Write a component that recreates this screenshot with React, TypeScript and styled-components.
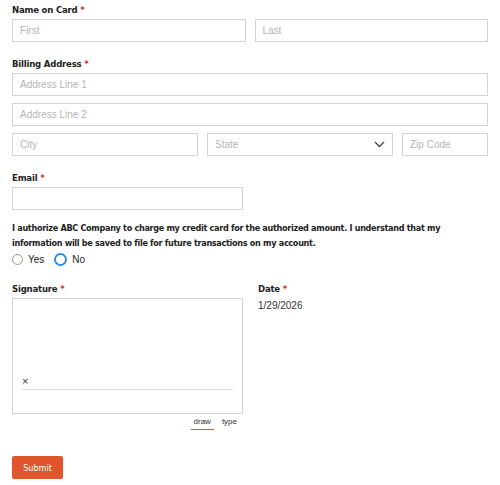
import React from "react";
import styled, { createGlobalStyle } from "styled-components";

const Global = createGlobalStyle`
  body { margin: 0; background: #fff; font-family: "Liberation Sans", Arial, sans-serif; }
  * { box-sizing: border-box; }
`;

const narrow = `"DejaVu Sans Condensed", "DejaVu Sans", sans-serif`;

const Form = styled.div`
  padding: 3px 12px 0 12px;
  width: 500px;
`;

const Field = styled.div<{ $mb?: number }>`
  margin-bottom: ${(p) => p.$mb ?? 15}px;
`;

const Label = styled.div`
  font-family: ${narrow};
  font-weight: bold;
  font-size: 9.5px;
  letter-spacing: -0.2px;
  line-height: 14px;
  color: #222;
  height: 16px;
  &::after { content: " *"; color: #d0302b; }
`;

const Row = styled.div<{ $cols: string }>`
  display: grid;
  grid-template-columns: ${(p) => p.$cols};
  gap: 9px;
  margin-bottom: 7px;
  &:last-child { margin-bottom: 0; }
`;

const Input = styled.div<{ $w?: number }>`
  height: 23px;
  width: ${(p) => (p.$w ? `${p.$w}px` : "auto")};
  border: 1px solid #d4d4d4;
  font-size: 10px;
  color: #b5b5b5;
  padding: 0 7px;
  display: flex;
  align-items: center;
  justify-content: space-between;
`;

const Para = styled.div`
  font-family: ${narrow};
  font-weight: bold;
  font-size: 9px;
  letter-spacing: -0.3px;
  line-height: 15px;
  color: #222;
  margin-bottom: 2px;
`;

const Radios = styled.div`
  display: flex;
  gap: 10px;
  font-size: 10px;
  line-height: 12px;
  color: #222;
  margin-bottom: 16px;
`;

const Radio = styled.span<{ $on?: boolean }>`
  display: flex;
  align-items: center;
  gap: 5px;
  &::before {
    content: "";
    width: 9px;
    height: 9px;
    border-radius: 50%;
    border: ${(p) => (p.$on ? "2.5px solid #2f8fdc" : "1px solid #999")};
  }
`;

const SigRow = styled.div`
  display: grid;
  grid-template-columns: 231px 1fr;
  gap: 15px;
  margin-bottom: 26px;
`;

const SigBox = styled.div`
  height: 116px;
  border: 1px solid #d4d4d4;
  padding: 0 9px 23px 9px;
  display: flex;
  flex-direction: column;
  justify-content: flex-end;
`;

const SigX = styled.div`
  font-size: 11px;
  line-height: 12px;
  color: #333;
  padding-bottom: 2px;
  border-bottom: 1px solid #ddd;
`;

const Tabs = styled.div`
  display: flex;
  justify-content: flex-end;
  gap: 5px;
  padding-right: 3px;
  margin-top: 2px;
  font-size: 8px;
  line-height: 11px;
  color: #333;
`;

const Tab = styled.span<{ $on?: boolean }>`
  padding: 0 3px 2px;
  border-bottom: 1px solid ${(p) => (p.$on ? "#2f8fdc" : "transparent")};
`;

const DateVal = styled.div`
  font-size: 10px;
  line-height: 12px;
  color: #333;
  margin-top: 2px;
`;

const Submit = styled.button`
  display: block;
  width: 51px;
  height: 23px;
  background: #e0552b;
  color: #fff;
  border: none;
  border-radius: 2px;
  font-family: ${narrow};
  font-size: 9px;
`;

export default function App() {
  return (
    <Form>
      <Global />
      <Field>
        <Label>Name on Card</Label>
        <Row $cols="1fr 1fr">
          <Input>First</Input>
          <Input>Last</Input>
        </Row>
      </Field>
      <Field>
        <Label>Billing Address</Label>
        <Row $cols="1fr"><Input>Address Line 1</Input></Row>
        <Row $cols="1fr"><Input>Address Line 2</Input></Row>
        <Row $cols="186px 186px 1fr">
          <Input>City</Input>
          <Input>
            State
            <svg width="11" height="7" viewBox="0 0 11 7"><path d="M1 1l4.5 4.5L10 1" fill="none" stroke="#444" strokeWidth="1.3" /></svg>
          </Input>
          <Input>Zip Code</Input>
        </Row>
      </Field>
      <Field $mb={11}>
        <Label>Email</Label>
        <Input $w={231} />
      </Field>
      <Para>
        I authorize ABC Company to charge my credit card for the authorized amount. I understand that my information will be saved to file for future transactions on my account.
      </Para>
      <Radios>
        <Radio>Yes</Radio>
        <Radio $on>No</Radio>
      </Radios>
      <SigRow>
        <div>
          <Label>Signature</Label>
          <SigBox><SigX>×</SigX></SigBox>
          <Tabs><Tab $on>draw</Tab><Tab>type</Tab></Tabs>
        </div>
        <div>
          <Label>Date</Label>
          <DateVal>1/29/2026</DateVal>
        </div>
      </SigRow>
      <Submit>Submit</Submit>
    </Form>
  );
}
